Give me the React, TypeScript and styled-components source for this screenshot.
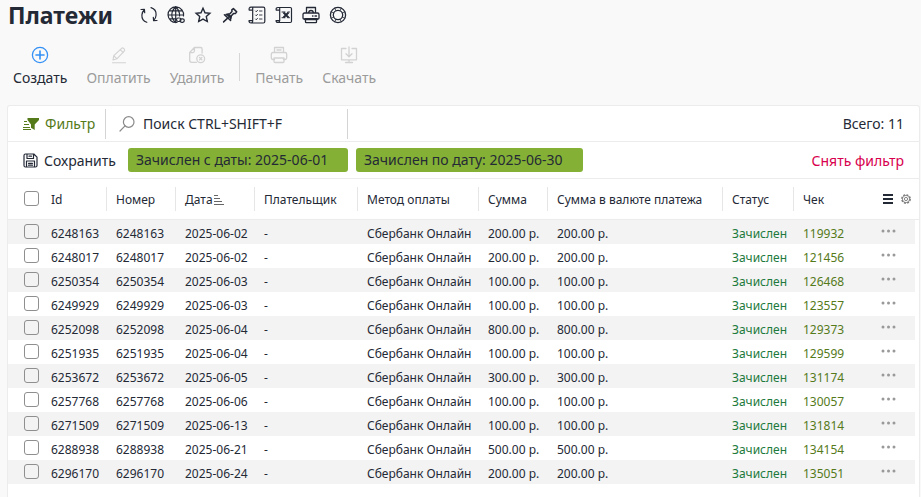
import React from "react";
import styled, { createGlobalStyle } from "styled-components";

const INK = "#242936";
const LINE = "#ececec";
const OLIVE = "#557a1a";

const GlobalStyle = createGlobalStyle`
  * { box-sizing: border-box; }
  body {
    margin: 0;
    background: #f9f9f9;
    color: ${INK};
    font-family: "Noto Sans", "Open Sans", sans-serif;
    font-size: 14px;
  }
  button, input { font: inherit; color: inherit; }
  svg { display: block; flex: none; }
`;

const Page = styled.div`
  display: flex;
  flex-direction: column;
  min-height: 100vh;
`;

const TitleBar = styled.header`
  display: flex;
  align-items: center;
  gap: 27px;
  height: 29px;
  padding-left: 8px;
`;

const Title = styled.h1`
  margin: 0;
  font-size: 23px;
  line-height: 32px;
  font-weight: 700;
`;

const IconRow = styled.nav`
  display: flex;
  gap: 9px;
`;

const PlainButton = styled.button`
  display: flex;
  align-items: center;
  padding: 0;
  border: 0;
  background: none;
  cursor: pointer;
`;

const Toolbar = styled.div`
  display: flex;
  align-items: center;
  height: 76px;
  padding-left: 13px;
  gap: 19px;
`;

const ToolButton = styled(PlainButton)`
  flex-direction: column;
  gap: 4px;
  line-height: 20px;
  color: #9c9c9c;
  svg { color: #d2d2d2; }

  &:enabled { color: ${INK}; }
  &:enabled svg { color: #3390f5; }
  &:disabled { cursor: default; }
`;

const ToolDivider = styled.span`
  width: 1px;
  height: 28px;
  margin: 0 -4px;
  background: #d6d6d6;
`;

const Panel = styled.main`
  flex: 1;
  margin: 0 1px 0 7px;
  border: 1px solid ${LINE};
  border-bottom: 0;
  border-radius: 3px 3px 0 0;
  background: #fff;
`;

const PanelRow = styled.div<{ $height: number }>`
  display: flex;
  align-items: center;
  height: ${(p) => p.$height}px;
  padding: 0 15px;
  border-bottom: 1px solid ${LINE};
`;

const FilterButton = styled(PlainButton)`
  width: 82px;
  gap: 6px;
  color: ${OLIVE};
`;

const Search = styled.label`
  display: flex;
  align-items: center;
  gap: 8px;
  width: 243px;
  height: 30px;
  padding-left: 13px;
  border: solid #d4d4d4;
  border-width: 0 1px;
  color: #8a8a8a;
`;

const SearchInput = styled.input`
  flex: 1;
  min-width: 0;
  padding: 0;
  border: 0;
  outline: 0;
  background: none;
  &::placeholder { color: ${INK}; opacity: 1; }
`;

const PushRight = styled.span`
  margin-left: auto;
`;

const SaveButton = styled(PlainButton)`
  width: 105px;
  gap: 6px;
  white-space: nowrap;
`;

const Chip = styled.button<{ $width: number }>`
  width: ${(p) => p.$width}px;
  height: 24px;
  margin-right: 8px;
  padding: 0 8px;
  border: 0;
  border-radius: 3px;
  background: #84b135;
  text-align: left;
  white-space: nowrap;
  line-height: 24px;
  cursor: pointer;
`;

const ResetButton = styled(PlainButton)`
  margin-left: auto;
  color: #d8004e;
  white-space: nowrap;
`;

const Table = styled.table`
  width: 100%;
  border-collapse: separate;
  border-spacing: 0;
  table-layout: fixed;
  font-size: 12px;
  line-height: 16px;
`;

const Col = styled.col<{ $width?: number }>`
  width: ${(p) => (p.$width ? `${p.$width}px` : "auto")};
`;

const HeadCell = styled.th`
  height: 41px;
  padding: 8px 0;
  border-bottom: 1px solid ${LINE};
  font-weight: 400;
  text-align: left;
  white-space: nowrap;
`;

const HeadInner = styled.div<{ $ruled?: boolean }>`
  display: flex;
  align-items: center;
  gap: 1px;
  height: 24px;
  padding: 2px 0 0 9px;
  border-right: 1px solid ${(p) => (p.$ruled ? "#e6e6e6" : "transparent")};
`;

const HeadTools = styled.div`
  display: flex;
  align-items: center;
  justify-content: flex-end;
  gap: 8px;
  padding-right: 8px;
`;

const Cell = styled.td`
  height: 24px;
  padding: 3px 0 0 9px;
  white-space: nowrap;
  color: ${INK};
`;

const StatusCell = styled(Cell)`
  color: #1d7a3c;
`;

const CheckCell = styled(Cell)`
  padding: 0 0 1px 16px;
`;

const MenuCell = styled(Cell)`
  padding: 0 19px 2px 0;
  border-right: 4px solid #fff;
`;

const Row = styled.tr`
  &:nth-child(odd) td { background: #f3f3f3; background-clip: padding-box; }
`;

const Check = styled.input.attrs({ type: "checkbox" })`
  appearance: none;
  display: block;
  width: 15px;
  height: 15px;
  margin: 0;
  border: 1px solid #8f8f8f;
  border-radius: 3px;
  background: transparent;
  &:checked { background: #84b135; }
`;

const HeadCheck = styled.div`
  padding: 0 0 2px 16px;
`;

const ReceiptLink = styled.a`
  color: ${OLIVE};
  text-decoration: none;
`;

const MoreButton = styled(PlainButton)`
  margin-left: auto;
  color: #999;
`;

type IconProps = { size?: number; children: React.ReactNode; width?: number };

const Icon = ({ size = 18, width = 1.3, children }: IconProps) => (
  <svg
    width={size}
    height={size}
    viewBox={`0 0 ${size} ${size}`}
    fill="none"
    stroke="currentColor"
    strokeWidth={width}
    strokeLinecap="round"
    strokeLinejoin="round"
    aria-hidden="true"
  >
    {children}
  </svg>
);

const RefreshIcon = () => (
  <Icon width={1.2}>
    <path d="M6.800 16.300C3.600 15.300 1.700 12.300 1.900 9c.1-2.200 1-4 2.400-5.300M1 3.500l3.400-.1.300 3.300M11 1.700C14.400 2.700 16.300 5.700 16.100 9c-.1 2.200-1 4-2.400 5.300M17 14.500l-3.400.1-.3-3.300" />
  </Icon>
);

const GlobeIcon = () => (
  <Icon width={1.2}>
    <path d="M10 16.400A7.800 7.800 0 1 1 16.500 10M8.700 1v15.500M8.700 1C3.500 5.500 3.500 12 8.700 16.500M8.700 1c2.900 2.600 4.100 5.600 3.900 9M2.300 4.900h12.900M1.200 9h15.300M2.300 12.800h6" />
    <rect x="9.500" y="12" width="4.500" height="3.500" rx="1.700" />
    <rect x="13" y="12.800" width="4.300" height="3.500" rx="1.700" />
  </Icon>
);

const StarIcon = () => (
  <Icon width={1.4}>
    <path d="M9 2.300l2 4.500 4.900.5-3.600 3.300 1 4.900L9 13.100l-4.300 2.400 1-4.900-3.600-3.300L7 6.800z" strokeLinejoin="miter" />
  </Icon>
);

const PinIcon = () => (
  <Icon width={1.5}>
    <path d="M2.600 15.900l4.600-4.300M3.400 8.700l6.200 5.800M5.200 8.600l3.700-.9 2.100-2.300-.2-1.500 1.600-1.300 3.300 3.300-1.300 1.600-1.700-.1-2.300 2.300-.7 3.300" />
    <path d="M5.200 8.800l4.400 4.300.6-3L8.200 8.200z" fill="currentColor" strokeWidth="0.5" />
  </Icon>
);

const ListIcon = () => (
  <Icon width={1.2}>
    <path d="M4.700 4.200V1.200h10.600q1.500 0 1.500 1.500v12.800q0 1.500-1.500 1.500H3M4.700 4.200H1.200Q.6 1.200 3 1.200h2M4.700 4.200v10.600M1 14.700h3.700Q4.700 17 3 17 1 17 1 14.700z" />
    <path d="M7.500 5l.8.8L9.500 4.300M7.500 9l.8.8L9.500 8.300M7.500 13l.8.8 1.200-1.500M11.500 5H14M11.500 9H14M11.500 13H14" strokeWidth="0.9" />
  </Icon>
);

const ExcelIcon = () => (
  <Icon width={1.2}>
    <path d="M4.700 4.200V1.500h10.600q1.200 0 1.200 1.200v12.600q0 1.200-1.200 1.200H3M4.700 4.200H1.200Q.7 1.500 3 1.500h2M4.700 4.200v10.600M1 14.600h3.700q0 1.900-1.700 1.900-2 0-2-1.900z" />
    <path d="M8.500 6.500l5 5M13.500 6.500l-5 5" strokeWidth="2" strokeLinecap="butt" />
    <path d="M7 6h3M7 11.700h3M13 6h1.500M13 11.700h1.500" strokeWidth="1" />
  </Icon>
);

const PrinterDarkIcon = () => (
  <Icon width={1.3}>
    <path d="M4.500 7V1.500h9V7M2.500 7h13q1.500 0 1.500 1.500V12q0 1-1 1H2q-1 0-1-1V8.500Q1 7 2.500 7zM6.500 6.500Q7 4.500 9 4.500t2.500 2M10.500 10h.5M13 10h1.500" />
    <path d="M3.500 12.700h11V16q0 .7-.7.700H4.200q-.7 0-.7-.7z" />
    <path d="M3 13.300h12" strokeWidth="2" />
  </Icon>
);

const HelpIcon = () => (
  <Icon width={1.3}>
    <circle cx="9" cy="9" r="7.600" />
    <circle cx="9" cy="9" r="4.700" />
    <path d="M5.800 2.200L7 4.800M2.200 5.800L4.800 7M12.200 2.200L11 4.800M15.800 5.800L13.200 7M5.800 15.800L7 13.200M2.200 12.200L4.800 11M12.200 15.800L11 13.200M15.800 12.200L13.200 11" strokeWidth="0.8" />
  </Icon>
);

const CreateIcon = () => (
  <Icon>
    <circle cx="9" cy="9" r="7.600" />
    <path d="M9 5v8M5 9h8" strokeWidth="1.600" />
  </Icon>
);

const PencilIcon = () => (
  <Icon width={1.1}>
    <path d="M3 14l.8-4.300 7.800-7.400q1-.8 2 .1l.7.800q.9 1-.1 2L6.900 12.800zM3.900 9.800l2.900 2.900M10.300 3.700l2.900 2.900M2.500 16.700h13" />
  </Icon>
);

const DeleteIcon = () => (
  <Icon>
    <path d="M8.500 16.300H3.700q-2 0-2-2V6.500l4.700-5h6.200q1.500 0 1.500 1.500v4M1.900 6.600h3q1.500 0 1.500-1.500V1.700" />
    <circle cx="12.700" cy="12.700" r="3.900" />
    <path d="M11.500 11.500l2.400 2.400M13.900 11.500l-2.400 2.400" />
  </Icon>
);

const PrintIcon = () => (
  <Icon>
    <path d="M4.500 6.500v-5h9v5M7 4h4M4.500 13.500H3q-1.700 0-1.700-1.700V8.200q0-1.700 1.700-1.700h12q1.700 0 1.700 1.700v3.600q0 1.700-1.700 1.700h-1.500M4 12h10v3.500q0 1-1 1H5q-1 0-1-1z" />
  </Icon>
);

const DownloadIcon = () => (
  <Icon>
    <path d="M6 2.500H1.500v11.300h15V2.500H12M9 1v9.500M6 7.700l3 3 3-3M9 14v2.300M5.500 16.500h7" />
  </Icon>
);

const FilterIcon = () => (
  <svg width="16" height="14" viewBox="0 0 16 14" aria-hidden="true">
    <path d="M4.500 1H16v2l-4.300 4.500V13L8 10.800V7.500L4.500 3z" fill={OLIVE} />
    <path d="M1 4.500h3M1 7.500h5M0 10.500h7M0 12.500h8" stroke={OLIVE} strokeWidth="1" />
  </svg>
);

const SearchIcon = () => (
  <Icon size={16} width={1.2}>
    <circle cx="9.700" cy="6" r="5.300" />
    <path d="M6 9.800L1 15" />
  </Icon>
);

const SaveIcon = () => (
  <Icon size={15} width={1.2}>
    <path d="M2.500 1h8.300L14 4.200V12.500Q14 14 12.500 14h-10Q1 14 1 12.500v-10Q1 1 2.500 1zM4 1v4.500h6.500V1M6 3.200h2.500M3.500 14V8h8v6M5.500 10.300h4M5.500 12.200h4" />
  </Icon>
);

const SortIcon = () => (
  <svg width="10" height="11" viewBox="0 0 10 11" stroke="#666" aria-hidden="true">
    <path d="M0 .5h4M0 3.500h6M0 6.500h8M0 9.500h10" />
  </svg>
);

const MenuIcon = () => (
  <svg width="10" height="10" viewBox="0 0 10 10" fill={INK} aria-hidden="true">
    <path d="M0 0h10v2H0zM0 4h10v2H0zM0 8h10v2H0z" />
  </svg>
);

const GearIcon = () => (
  <svg width="10" height="10" viewBox="0 0 10 10" fill="none" stroke="#777" aria-hidden="true">
    <circle cx="5" cy="5" r="4.200" strokeWidth="1.400" strokeDasharray="1.900 1.400" />
    <circle cx="5" cy="5" r="3.600" strokeWidth="0.800" />
    <circle cx="5" cy="5" r="1.600" strokeWidth="0.900" />
  </svg>
);

const DotsIcon = () => (
  <svg width="15" height="4" viewBox="0 0 15 4" fill="currentColor" aria-hidden="true">
    <circle cx="2" cy="2" r="1.500" />
    <circle cx="7.500" cy="2" r="1.500" />
    <circle cx="13" cy="2" r="1.500" />
  </svg>
);

const titleActions = [
  { label: "Обновить", icon: <RefreshIcon /> },
  { label: "Ссылка", icon: <GlobeIcon /> },
  { label: "В избранное", icon: <StarIcon /> },
  { label: "Закрепить", icon: <PinIcon /> },
  { label: "Журнал", icon: <ListIcon /> },
  { label: "Экспорт в Excel", icon: <ExcelIcon /> },
  { label: "Печать страницы", icon: <PrinterDarkIcon /> },
  { label: "Помощь", icon: <HelpIcon /> },
];

const columns = [
  { title: "Id", width: 65 },
  { title: "Номер", width: 69 },
  { title: "Дата", width: 79, sorted: true },
  { title: "Плательщик", width: 103 },
  { title: "Метод оплаты", width: 121 },
  { title: "Сумма", width: 69 },
  { title: "Сумма в валюте платежа", width: 175 },
  { title: "Статус", width: 71 },
  { title: "Чек", width: 64, last: true },
];

const payments = [
  { id: "6248163", date: "2025-06-02", sum: "200.00 р.", receipt: "119932" },
  { id: "6248017", date: "2025-06-02", sum: "200.00 р.", receipt: "121456" },
  { id: "6250354", date: "2025-06-03", sum: "100.00 р.", receipt: "126468" },
  { id: "6249929", date: "2025-06-03", sum: "100.00 р.", receipt: "123557" },
  { id: "6252098", date: "2025-06-04", sum: "800.00 р.", receipt: "129373" },
  { id: "6251935", date: "2025-06-04", sum: "100.00 р.", receipt: "129599" },
  { id: "6253672", date: "2025-06-05", sum: "300.00 р.", receipt: "131174" },
  { id: "6257768", date: "2025-06-06", sum: "100.00 р.", receipt: "130057" },
  { id: "6271509", date: "2025-06-13", sum: "100.00 р.", receipt: "131814" },
  { id: "6288938", date: "2025-06-21", sum: "500.00 р.", receipt: "134154" },
  { id: "6296170", date: "2025-06-24", sum: "200.00 р.", receipt: "135051" },
];

export default function App() {
  return (
    <Page>
      <GlobalStyle />
      <TitleBar>
        <Title>Платежи</Title>
        <IconRow>
          {titleActions.map((action) => (
            <PlainButton key={action.label} aria-label={action.label}>
              {action.icon}
            </PlainButton>
          ))}
        </IconRow>
      </TitleBar>

      <Toolbar>
        <ToolButton><CreateIcon />Создать</ToolButton>
        <ToolButton disabled><PencilIcon />Оплатить</ToolButton>
        <ToolButton disabled><DeleteIcon />Удалить</ToolButton>
        <ToolDivider />
        <ToolButton disabled><PrintIcon />Печать</ToolButton>
        <ToolButton disabled><DownloadIcon />Скачать</ToolButton>
      </Toolbar>

      <Panel>
        <PanelRow $height={36}>
          <FilterButton><FilterIcon />Фильтр</FilterButton>
          <Search>
            <SearchIcon />
            <SearchInput type="text" aria-label="Поиск" placeholder="Поиск CTRL+SHIFT+F" />
          </Search>
          <PushRight>Всего: 11</PushRight>
        </PanelRow>
        <PanelRow $height={37}>
          <SaveButton><SaveIcon />Сохранить</SaveButton>
          <Chip $width={220}>Зачислен с даты: 2025-06-01</Chip>
          <Chip $width={227}>Зачислен по дату: 2025-06-30</Chip>
          <ResetButton>Снять фильтр</ResetButton>
        </PanelRow>

        <Table>
          <colgroup>
            <Col $width={34} />
            {columns.map((c) => <Col key={c.title} $width={c.width} />)}
            <Col />
          </colgroup>
          <thead>
            <tr>
              <HeadCell>
                <HeadCheck><Check aria-label="Выбрать все" /></HeadCheck>
              </HeadCell>
              {columns.map((c) => (
                <HeadCell key={c.title} scope="col">
                  <HeadInner $ruled={!c.last}>
                    {c.title}
                    {c.sorted && <SortIcon />}
                  </HeadInner>
                </HeadCell>
              ))}
              <HeadCell>
                <HeadTools>
                  <PlainButton aria-label="Меню таблицы"><MenuIcon /></PlainButton>
                  <PlainButton aria-label="Настройки"><GearIcon /></PlainButton>
                </HeadTools>
              </HeadCell>
            </tr>
          </thead>
          <tbody>
            {payments.map((p) => (
              <Row key={p.id}>
                <CheckCell><Check aria-label={`Выбрать ${p.id}`} /></CheckCell>
                <Cell>{p.id}</Cell>
                <Cell>{p.id}</Cell>
                <Cell>{p.date}</Cell>
                <Cell>-</Cell>
                <Cell>Сбербанк Онлайн</Cell>
                <Cell>{p.sum}</Cell>
                <Cell>{p.sum}</Cell>
                <StatusCell>Зачислен</StatusCell>
                <Cell><ReceiptLink href="#">{p.receipt}</ReceiptLink></Cell>
                <MenuCell><MoreButton aria-label="Действия"><DotsIcon /></MoreButton></MenuCell>
              </Row>
            ))}
          </tbody>
        </Table>
      </Panel>
    </Page>
  );
}
